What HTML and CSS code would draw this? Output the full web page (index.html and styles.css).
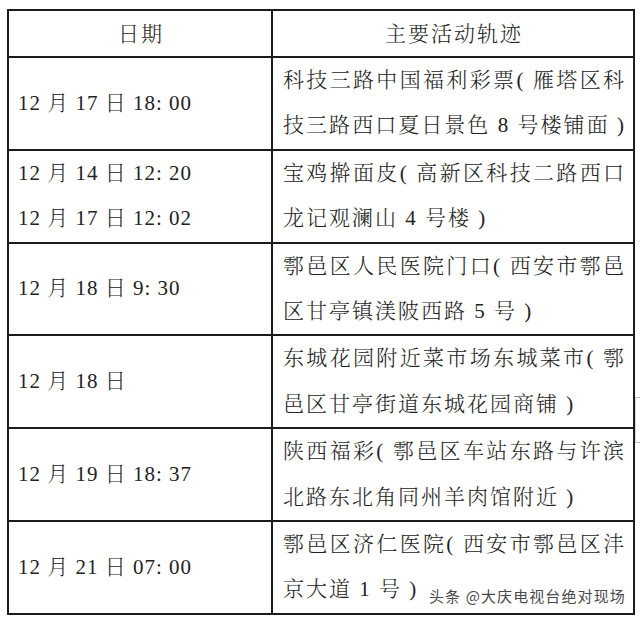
FILE: index.html
```html
<!DOCTYPE html>
<html lang="zh-CN">
<head>
<meta charset="utf-8">
<title>主要活动轨迹</title>
<link rel="stylesheet" href="styles.css">
</head>
<body>
<div class="page">
  <table class="track">
    <colgroup><col class="c-date"><col class="c-place"></colgroup>
    <thead>
      <tr class="head">
        <th>日期</th>
        <th>主要活动轨迹</th>
      </tr>
    </thead>
    <tbody>
      <tr class="row">
        <td class="date">12 月 17 日 18: 00</td>
        <td class="place"><span class="full">科技三路中国福利彩票( 雁塔区科</span><span class="full">技三路西口夏日景色 8 号楼铺面 )</span></td>
      </tr>
      <tr class="row">
        <td class="date"><span class="line">12 月 14 日 12: 20</span><span class="line">12 月 17 日 12: 02</span></td>
        <td class="place"><span class="full">宝鸡擀面皮( 高新区科技二路西口</span><span class="line">龙记观澜山 4 号楼 )</span></td>
      </tr>
      <tr class="row">
        <td class="date">12 月 18 日 9: 30</td>
        <td class="place"><span class="full">鄠邑区人民医院门口( 西安市鄠邑</span><span class="line">区甘亭镇渼陂西路 5 号 )</span></td>
      </tr>
      <tr class="row">
        <td class="date">12 月 18 日</td>
        <td class="place"><span class="full">东城花园附近菜市场东城菜市( 鄠</span><span class="line">邑区甘亭街道东城花园商铺 )</span></td>
      </tr>
      <tr class="row">
        <td class="date">12 月 19 日 18: 37</td>
        <td class="place"><span class="full">陕西福彩( 鄠邑区车站东路与许滨</span><span class="line">北路东北角同州羊肉馆附近 )</span></td>
      </tr>
      <tr class="row">
        <td class="date">12 月 21 日 07: 00</td>
        <td class="place"><span class="full">鄠邑区济仁医院( 西安市鄠邑区沣</span><span class="line">京大道 1 号 )</span></td>
      </tr>
    </tbody>
  </table>
  <div class="watermark">头条 @大庆电视台绝对现场</div>
  <div class="edge-mark"></div>
</div>
</body>
</html>
```
FILE: styles.css
```css
html, body {
  margin: 0;
  padding: 0;
  background: #ffffff;
}

.page {
  position: relative;
  width: 640px;
  height: 618px;
  padding: 9px 0 0 7px;
  box-sizing: border-box;
  font-family: "Liberation Serif", "Noto Serif CJK SC", "Noto Sans CJK SC", serif;
  color: #222222;
}

.track {
  border-collapse: collapse;
  table-layout: fixed;
  width: 626px;
  font-size: 21px;
  font-weight: 300;
  letter-spacing: 2px;
}

.c-date { width: 264px; }
.c-place { width: 362px; }

.track th,
.track td {
  border: 2px solid #1c1c1c;
  padding: 0;
}

.head { height: 47px; }

.track th {
  font-weight: 300;
  text-align: center;
  vertical-align: middle;
  line-height: 24px;
  padding-left: 2px;
}

.date {
  padding-left: 9px !important;
  vertical-align: middle;
  line-height: 45.4px;
  white-space: nowrap;
  letter-spacing: 1px;
}

.place {
  padding: 0 7px 0 10px !important;
  vertical-align: middle;
  line-height: 45.4px;
  white-space: nowrap;
}

.line {
  display: block;
}

.full {
  display: block;
  text-align: justify;
  text-align-last: justify;
  text-justify: inter-character;
}

.watermark {
  position: absolute;
  left: 429px;
  top: 585px;
  font-family: "Noto Sans CJK SC", "Noto Sans", sans-serif;
  font-size: 15px;
  line-height: 22px;
  color: #4a4a4a;
  letter-spacing: 1.1px;
  text-shadow: 0 0 1px #ffffff, 0 0 2px #ffffff;
}

.edge-mark {
  position: absolute;
  left: 635px;
  top: 397px;
  width: 5px;
  height: 46px;
  border-left: 1px solid #d6d6d6;
  border-top: 1px solid #bdbdbd;
  border-bottom: 1px solid #bdbdbd;
  box-sizing: border-box;
}
```
